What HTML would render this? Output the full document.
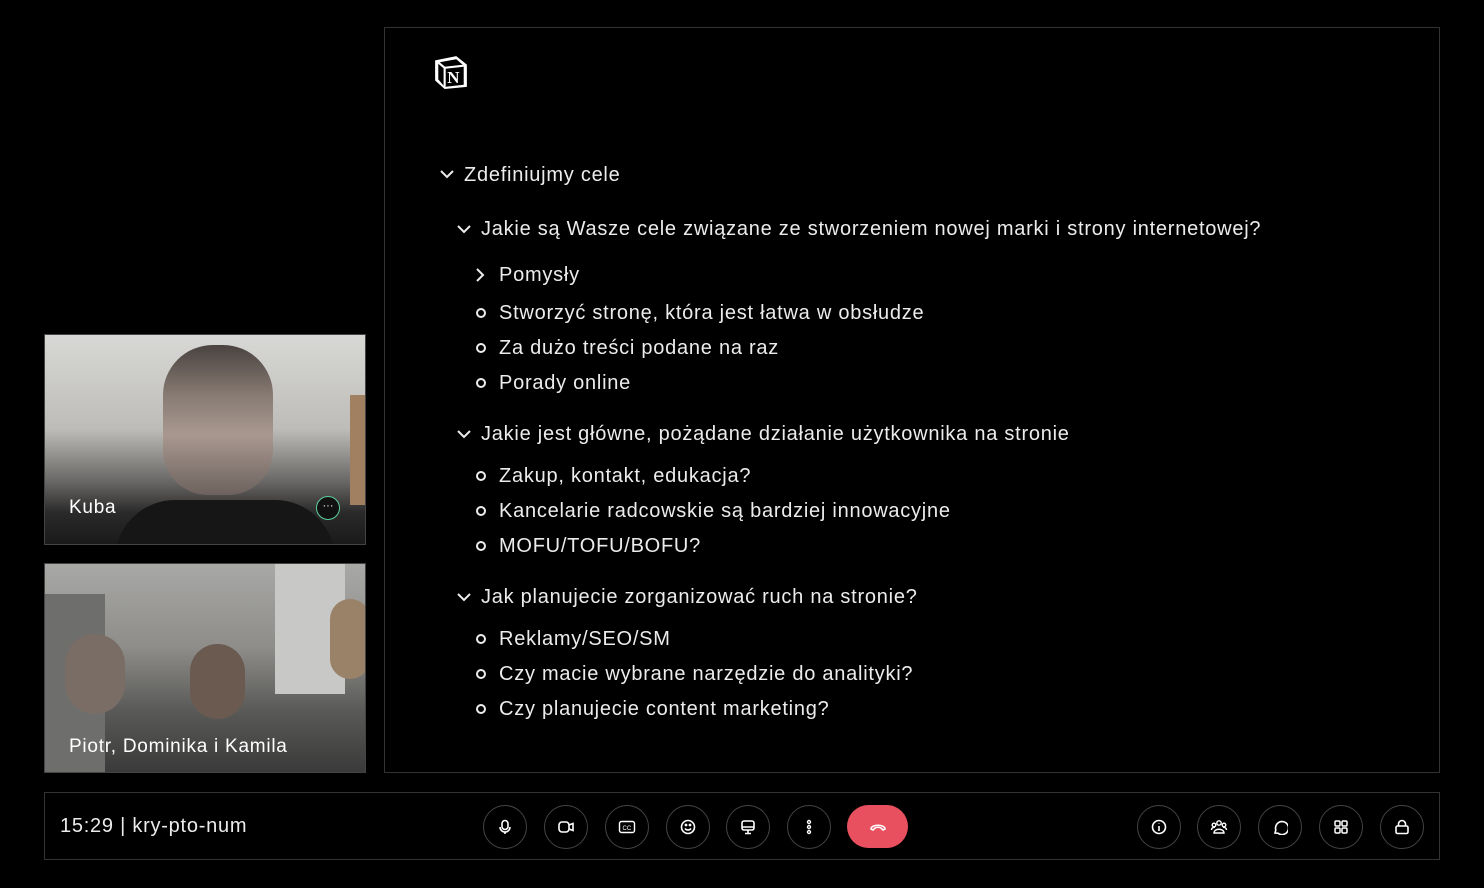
<!DOCTYPE html>
<html><head><meta charset="utf-8"><style>
body{margin:0;width:1484px;height:888px;background:#000;font-family:"Liberation Sans",sans-serif;color:#ececec;position:relative;overflow:hidden}
.abs{position:absolute}
.panel{left:384px;top:27px;width:1056px;height:746px;border:1px solid #333;box-sizing:border-box}
.t{position:absolute;font-size:20px;white-space:nowrap;line-height:24px;letter-spacing:0.75px}
.b{position:absolute;width:6px;height:6px;border:2px solid #ececec;border-radius:50%}
.tile{position:absolute;left:44px;width:322px;border:1px solid #444;box-sizing:border-box;overflow:hidden}
.bar{left:44px;top:792px;width:1396px;height:68px;border:1px solid #333;box-sizing:border-box}
.btn{position:absolute;top:805px;width:42px;height:42px;border:1px solid #444;border-radius:50%;display:flex;align-items:center;justify-content:center}
svg{display:block}
</style></head><body>
<div class="abs panel"></div>
<div class="abs" style="left:433px;top:54px">
<svg width="36" height="36" viewBox="0 0 34 34"><path d="M2 6 L22 2 L32 10 L32 31 L11 33 L2 25 Z" fill="#fff"/><path d="M5 8 L22 5 L29 11 L29 29 L11 31 L5 24 Z" fill="#000"/><path d="M5 8 L11 13 L29 11" stroke="#fff" stroke-width="2" fill="none"/><path d="M11 13 L11 31" stroke="#fff" stroke-width="2"/><text x="13.5" y="27.5" font-family="Liberation Serif" font-weight="bold" font-size="16" fill="#fff">N</text></svg></div>

<svg class="abs" style="left:439px;top:168px" width="16" height="12"><path d="M2 3l6 6 6-6" stroke="#ececec" stroke-width="2" fill="none"/></svg>
<div class="t" style="left:464px;top:163px">Zdefiniujmy cele</div>
<svg class="abs" style="left:456px;top:223px" width="16" height="12"><path d="M2 3l6 6 6-6" stroke="#ececec" stroke-width="2" fill="none"/></svg>
<div class="t" style="left:481px;top:217px">Jakie są Wasze cele związane ze stworzeniem nowej marki i strony internetowej?</div>
<svg class="abs" style="left:474px;top:267px" width="12" height="16"><path d="M3 2l6 6-6 6" stroke="#ececec" stroke-width="2" fill="none"/></svg>
<div class="t" style="left:499px;top:263px">Pomysły</div>
<div class="b" style="left:476px;top:308px"></div><div class="t" style="left:499px;top:301px">Stworzyć stronę, która jest łatwa w obsłudze</div>
<div class="b" style="left:476px;top:343px"></div><div class="t" style="left:499px;top:336px">Za dużo treści podane na raz</div>
<div class="b" style="left:476px;top:378px"></div><div class="t" style="left:499px;top:371px">Porady online</div>
<svg class="abs" style="left:456px;top:428px" width="16" height="12"><path d="M2 3l6 6 6-6" stroke="#ececec" stroke-width="2" fill="none"/></svg>
<div class="t" style="left:481px;top:422px">Jakie jest główne, pożądane działanie użytkownika na stronie</div>
<div class="b" style="left:476px;top:471px"></div><div class="t" style="left:499px;top:464px">Zakup, kontakt, edukacja?</div>
<div class="b" style="left:476px;top:506px"></div><div class="t" style="left:499px;top:499px">Kancelarie radcowskie są bardziej innowacyjne</div>
<div class="b" style="left:476px;top:541px"></div><div class="t" style="left:499px;top:534px">MOFU/TOFU/BOFU?</div>
<svg class="abs" style="left:456px;top:591px" width="16" height="12"><path d="M2 3l6 6 6-6" stroke="#ececec" stroke-width="2" fill="none"/></svg>
<div class="t" style="left:481px;top:585px">Jak planujecie zorganizować ruch na stronie?</div>
<div class="b" style="left:476px;top:634px"></div><div class="t" style="left:499px;top:627px">Reklamy/SEO/SM</div>
<div class="b" style="left:476px;top:669px"></div><div class="t" style="left:499px;top:662px">Czy macie wybrane narzędzie do analityki?</div>
<div class="b" style="left:476px;top:704px"></div><div class="t" style="left:499px;top:697px">Czy planujecie content marketing?</div>

<div class="tile" style="top:334px;height:211px;background:linear-gradient(180deg,#d8d8d6 0%,#bdbcb8 45%,#6a6866 70%,#2a2a2a 85%,#1a1a1a 100%)">
 <div class="abs" style="left:118px;top:10px;width:110px;height:150px;border-radius:50px 50px 45px 45px;background:linear-gradient(180deg,#4a4340 0%,#8a7d75 35%,#a89890 60%,#6d625d 100%)"></div>
 <div class="abs" style="left:70px;top:165px;width:220px;height:60px;border-radius:60px 60px 0 0;background:#161616"></div>
 <div class="abs" style="left:305px;top:60px;width:16px;height:110px;background:#a08060"></div>
 <div class="t" style="left:24px;top:161px;font-size:19px;color:#fff">Kuba</div>
 <div class="abs" style="left:271px;top:161px;width:22px;height:22px;border:1px solid #5fd0a0;border-radius:50%;background:#111;color:#fff;font-size:11px;text-align:center;line-height:18px">···</div>
</div>
<div class="tile" style="top:563px;height:210px;background:linear-gradient(180deg,#a8a8a6 0%,#8e8d8a 40%,#5a5a58 70%,#3a3a3a 100%)">
 <div class="abs" style="left:0;top:30px;width:60px;height:180px;background:#6e6e6c"></div>
 <div class="abs" style="left:230px;top:0;width:70px;height:130px;background:#c8c8c6"></div>
 <div class="abs" style="left:20px;top:70px;width:60px;height:80px;border-radius:30px;background:#7a6d66"></div>
 <div class="abs" style="left:145px;top:80px;width:55px;height:75px;border-radius:28px;background:#6b5a50"></div>
 <div class="abs" style="left:285px;top:35px;width:40px;height:80px;border-radius:20px;background:#9a8268"></div>
 <div class="t" style="left:24px;top:171px;font-size:19px;color:#fff">Piotr, Dominika i Kamila</div>
</div>

<div class="abs bar"></div>
<div class="t" style="left:60px;top:814px;font-size:20px">15:29 | kry-pto-num</div>
<div class="btn" style="left:483px"><svg width="16" height="16" viewBox="0 0 16 16" fill="none" stroke="#fff" stroke-width="1.6"><rect x="5" y="1.5" width="6" height="9" rx="3"/><path d="M3 8a5 5 0 0 0 10 0M8 13v2"/></svg></div>
<div class="btn" style="left:544px"><svg width="18" height="16" viewBox="0 0 18 16" fill="none" stroke="#fff" stroke-width="1.6"><rect x="2" y="3" width="10" height="10" rx="3"/><path d="M12 6l4-1.5v7L12 10"/></svg></div>
<div class="btn" style="left:605px"><svg width="18" height="14" viewBox="0 0 18 14" fill="none" stroke="#fff" stroke-width="1.4"><rect x="1.5" y="1.5" width="15" height="11" rx="2"/><text x="4.5" y="10" font-size="6" fill="#fff" stroke="none" font-family="Liberation Sans">CC</text></svg></div>
<div class="btn" style="left:666px"><svg width="16" height="16" viewBox="0 0 16 16" fill="none" stroke="#fff" stroke-width="1.6"><circle cx="8" cy="8" r="6.5"/><path d="M5 9.5c1.5 2 4.5 2 6 0"/><circle cx="6" cy="6" r=".6" fill="#fff"/><circle cx="10" cy="6" r=".6" fill="#fff"/></svg></div>
<div class="btn" style="left:726px"><svg width="16" height="16" viewBox="0 0 16 16" fill="none" stroke="#fff" stroke-width="1.6"><rect x="2" y="2" width="12" height="9" rx="2"/><path d="M2 8h12M8 11v3M5 14.5h6"/></svg></div>
<div class="btn" style="left:787px"><svg width="6" height="16" viewBox="0 0 6 16" fill="none" stroke="#fff" stroke-width="1.4"><circle cx="3" cy="3" r="1.5"/><circle cx="3" cy="8" r="1.5"/><circle cx="3" cy="13" r="1.5"/></svg></div>
<div class="abs" style="left:847px;top:805px;width:61px;height:43px;border-radius:22px;background:#e8505f;display:flex;align-items:center;justify-content:center"><svg width="18" height="10" viewBox="0 0 18 10" fill="none" stroke="#fff" stroke-width="1.6"><path d="M2 7c0-5 14-5 14 0l-2 1-2-2c-2-1-4-1-6 0L4 8z"/></svg></div>
<div class="btn" style="left:1137px"><svg width="16" height="16" viewBox="0 0 16 16" fill="none" stroke="#fff" stroke-width="1.6"><circle cx="8" cy="8" r="6.5"/><path d="M8 7v5M8 4.5v.5"/></svg></div>
<div class="btn" style="left:1197px"><svg width="18" height="16" viewBox="0 0 18 16" fill="none" stroke="#fff" stroke-width="1.4"><circle cx="9" cy="4" r="2.2"/><circle cx="4" cy="6" r="1.8"/><circle cx="14" cy="6" r="1.8"/><path d="M4 14c0-5 10-5 10 0zM1.5 11c0-2 2-3 3.5-2.5M16.5 11c0-2-2-3-3.5-2.5"/></svg></div>
<div class="btn" style="left:1258px"><svg width="16" height="16" viewBox="0 0 16 16" fill="none" stroke="#fff" stroke-width="1.6"><path d="M3 14l.8-3A6.5 6.5 0 1 1 6 14.2z"/></svg></div>
<div class="btn" style="left:1319px"><svg width="16" height="16" viewBox="0 0 16 16" fill="none" stroke="#fff" stroke-width="1.5"><rect x="2" y="2" width="5" height="5" rx="1.2"/><rect x="9" y="2" width="5" height="5" rx="1.2"/><rect x="2" y="9" width="5" height="5" rx="1.2"/><rect x="9" y="9" width="5" height="5" rx="1.2"/></svg></div>
<div class="btn" style="left:1380px"><svg width="16" height="16" viewBox="0 0 16 16" fill="none" stroke="#fff" stroke-width="1.6"><rect x="2" y="7" width="12" height="7.5" rx="1.5"/><path d="M4.5 7V5a3.5 3.5 0 0 1 7 0v2"/></svg></div>
</body></html>
